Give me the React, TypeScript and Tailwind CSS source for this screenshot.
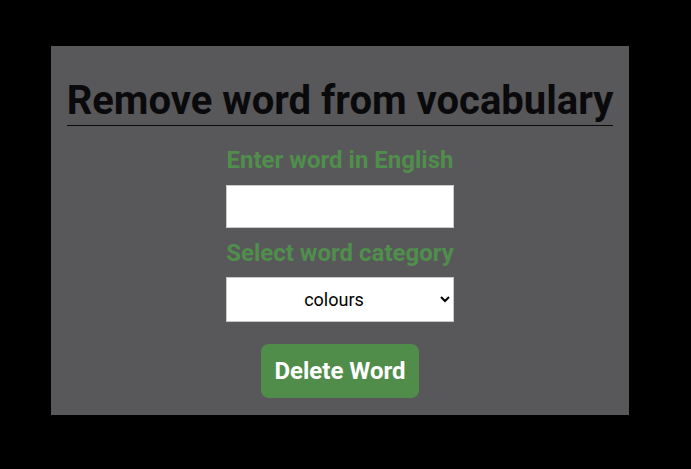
import { useState } from "react";

export default function App() {
  const [word, setWord] = useState("");
  const [category, setCategory] = useState("colours");

  return (
    <div className="min-h-screen bg-black pt-[46px] font-['Roboto','Liberation_Sans',sans-serif]">
      <div className="ml-[51px] w-[578px] h-[369px] bg-[#58585a] flex flex-col items-center pt-[31px]">
        <h1 className="text-[40px] leading-[48px] font-bold text-[#0a0a0c] border-b border-[#0a0a0c]">
          Remove word from vocabulary
        </h1>
        <label
          htmlFor="word"
          className="mt-[20px] text-[24px] leading-[28px] font-bold text-[#4f8e4b]"
        >
          Enter word in English
        </label>
        <input
          id="word"
          type="text"
          value={word}
          onChange={(e) => setWord(e.target.value)}
          className="mt-[11px] w-[228px] h-[43px] bg-white border border-[#c8c8c8] outline-none px-2 text-[18px]"
        />
        <label
          htmlFor="category"
          className="mt-[11px] text-[24px] leading-[28px] font-bold text-[#4f8e4b]"
        >
          Select word category
        </label>
        <select
          id="category"
          value={category}
          onChange={(e) => setCategory(e.target.value)}
          className="mt-[10px] w-[228px] h-[45px] bg-white border border-[#c8c8c8] text-[18px] text-black text-center [text-align-last:center] appearance-auto"
        >
          <option value="colours">colours</option>
          <option value="animals">animals</option>
          <option value="food">food</option>
        </select>
        <button className="mt-[22px] w-[158px] h-[54px] bg-[#508d4b] text-white text-[24px] font-bold rounded-lg">
          Delete Word
        </button>
      </div>
    </div>
  );
}
